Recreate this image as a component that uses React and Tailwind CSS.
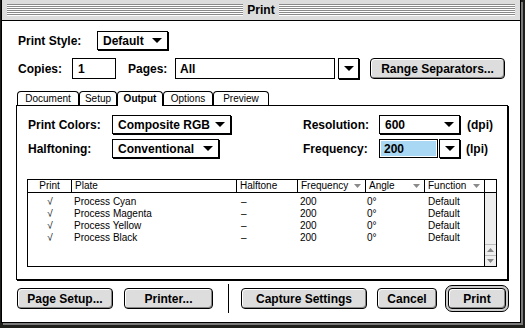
import React from 'react';

const Tri = ({ w = 10, h = 5, fill = '#000' }) => (
  <svg width={w} height={h} viewBox={`0 0 ${w} ${h}`} className="shrink-0">
    <polygon points={`0,0 ${w},0 ${w / 2},${h}`} fill={fill} />
  </svg>
);

const UpTri = ({ w = 7, h = 4, fill = '#888' }) => (
  <svg width={w} height={h} viewBox={`0 0 ${w} ${h}`}>
    <polygon points={`0,${h} ${w},${h} ${w / 2},0`} fill={fill} />
  </svg>
);

const Stripes = () => (
  <div className="flex flex-1 flex-col">
    {[0, 1, 2, 3, 4, 5].map((i) => (
      <div key={i} className="h-[2px] border-t border-[#8a8a8a] bg-white" />
    ))}
  </div>
);

const Popup = ({ label, className = '' }) => (
  <div className={`flex h-[19px] shrink-0 items-center justify-between border border-black bg-white pl-[5px] pr-[5px] text-[12px] font-bold shadow-[1px_1px_0_#000] ${className}`}>
    <span>{label}</span>
    <Tri />
  </div>
);

const ArrowBox = ({ className = '' }) => (
  <div className={`flex shrink-0 items-center justify-center border border-black bg-white shadow-[1px_1px_0_#000] ${className}`}>
    <Tri />
  </div>
);

const Button = ({ children, className = '' }) => (
  <div className={`flex h-[21px] shrink-0 items-center justify-center rounded-[4px] border border-black bg-[#dddddd] text-[12px] font-bold shadow-[inset_1px_1px_0_#fff,inset_-1px_-1px_0_#888] ${className}`}>
    {children}
  </div>
);

const tabs = [
  { name: 'Document', w: 'w-[62px]' },
  { name: 'Setup', w: 'w-[38px]' },
  { name: 'Output', w: 'w-[46px]', active: true },
  { name: 'Options', w: 'w-[50px]' },
  { name: 'Preview', w: 'w-[56px]' },
];

const cols = [
  { name: 'Print', w: 'w-[44px]', center: true },
  { name: 'Plate', w: 'w-[165px]' },
  { name: 'Halftone', w: 'w-[61px]' },
  { name: 'Frequency', w: 'w-[68px]', sort: true },
  { name: 'Angle', w: 'w-[59px]', sort: true },
  { name: 'Function', w: 'w-[59px]', sort: true, last: true },
];

const plates = ['Process Cyan', 'Process Magenta', 'Process Yellow', 'Process Black'];

export default function App() {
  return (
    <div className="h-[328px] w-[525px] overflow-hidden bg-[#1e1e1a] font-['Liberation_Sans',sans-serif] text-black">
      <div className="ml-px w-[520px] border-x border-b border-black shadow-[2px_2px_0_#7a7a7a]">
        {/* Title bar */}
        <div className="flex h-[21px] items-center border-b border-black bg-[#dddddd] px-[5px]">
          <Stripes />
          <span className="px-[4px] text-[12px] font-bold leading-none">Print</span>
          <Stripes />
        </div>

        {/* Body */}
        <div className="bg-white pb-[10px] pl-[14px] pr-[11px] pt-[10px]">
          <div className="ml-[2px] flex h-[20px] items-start">
            <span className="mt-[1px] w-[79px] text-[12px] font-bold">Print Style:</span>
            <Popup label="Default" className="w-[71px]" />
          </div>

          <div className="ml-[2px] mt-[7px] flex h-[21px] items-center">
            <span className="w-[54px] text-[12px] font-bold">Copies:</span>
            <div className="flex h-[21px] w-[44px] items-center border border-black pl-[5px] text-[12px] font-bold">1</div>
            <span className="ml-[12px] w-[47px] text-[12px] font-bold">Pages:</span>
            <div className="flex h-[21px] w-[160px] items-center border border-black pl-[4px] text-[12px] font-bold">All</div>
            <ArrowBox className="ml-[3px] h-[21px] w-[21px]" />
            <Button className="ml-[11px] h-[20px] w-[135px]">Range Separators...</Button>
          </div>

          {/* Tabs */}
          <div className="ml-px mt-[12px] flex h-[14px] items-end">
            {tabs.map((t) => (
              <div
                key={t.name}
                className={`relative flex items-center justify-center rounded-t-[4px] border-x border-t border-black bg-white text-[10px] leading-none ${t.w} ${
                  t.active ? 'z-10 -mb-px h-[15px] font-bold' : 'h-[14px]'
                }`}
              >
                {t.name}
              </div>
            ))}
          </div>

          {/* Panel */}
          <div className="h-[175px] w-[492px] border border-black pl-[11px] pt-[9px] shadow-[1px_1px_0_#000]">
            <div className="flex">
              <div className="flex w-[275px] flex-col gap-[4px]">
                <div className="flex h-[20px] items-start">
                  <span className="mt-[1px] w-[84px] text-[12px] font-bold">Print Colors:</span>
                  <Popup label="Composite RGB" className="w-[119px]" />
                </div>
                <div className="flex h-[20px] items-start">
                  <span className="mt-[1px] w-[84px] text-[12px] font-bold">Halftoning:</span>
                  <Popup label="Conventional" className="w-[107px]" />
                </div>
              </div>
              <div className="flex flex-col gap-[4px]">
                <div className="flex h-[20px] items-start">
                  <span className="mt-[1px] w-[76px] text-[12px] font-bold">Resolution:</span>
                  <Popup label="600" className="w-[81px]" />
                  <span className="ml-[7px] mt-[1px] text-[12px] font-bold">(dpi)</span>
                </div>
                <div className="flex h-[20px] items-start">
                  <span className="mt-[1px] w-[76px] text-[12px] font-bold">Frequency:</span>
                  <div className="h-[19px] w-[59px] border border-black bg-white p-px">
                    <div className="flex h-full items-center bg-[#a8d8f4] pl-[3px] text-[12px] font-bold">200</div>
                  </div>
                  <ArrowBox className="ml-px h-[19px] w-[21px]" />
                  <span className="ml-[6px] mt-[1px] text-[12px] font-bold">(lpi)</span>
                </div>
              </div>
            </div>

            {/* Table */}
            <div className="-ml-px mt-[20px] flex h-[88px] w-[470px] border border-black text-[10px] leading-none">
              <div className="flex flex-1 flex-col">
                <div className="flex h-[13px] border-b border-black">
                  {cols.map((c) => (
                    <div
                      key={c.name}
                      className={`flex items-center ${c.w} ${c.last ? '' : 'border-r border-black'} ${
                        c.center ? 'justify-center' : 'justify-between pl-[3px] pr-[4px]'
                      }`}
                    >
                      <span>{c.name}</span>
                      {c.sort && <Tri w={7} h={4} fill="#8a8a8a" />}
                    </div>
                  ))}
                </div>
                <div className="pt-[3px]">
                  {plates.map((p) => (
                    <div key={p} className="flex h-[12px] items-center">
                      <div className="flex w-[44px] justify-center">√</div>
                      <div className="w-[165px] pl-[2px]">{p}</div>
                      <div className="w-[61px] pl-[4px]">–</div>
                      <div className="w-[68px] pl-[2px]">200</div>
                      <div className="w-[59px] pl-[1px]">0°</div>
                      <div className="w-[59px] pl-[3px]">Default</div>
                    </div>
                  ))}
                </div>
              </div>
              <div className="flex w-[12px] flex-col border-l border-black">
                <div className="h-[13px] border-b border-black bg-white" />
                <div className="flex-1 bg-[#eeeeee]" />
                <div className="flex h-[11px] items-center justify-center border-t border-[#bbbbbb] bg-[#eeeeee]">
                  <UpTri />
                </div>
                <div className="flex h-[11px] items-center justify-center border-t border-[#bbbbbb] bg-[#eeeeee]">
                  <Tri w={7} h={4} fill="#888" />
                </div>
              </div>
            </div>
          </div>

          {/* Buttons */}
          <div className="ml-px mt-[5px] flex h-[27px] items-center">
            <Button className="w-[96px]">Page Setup...</Button>
            <Button className="ml-[11px] w-[89px]">Printer...</Button>
            <div className="ml-[15px] h-[29px] w-px bg-black" />
            <Button className="ml-[12px] w-[126px]">Capture Settings</Button>
            <Button className="ml-[10px] w-[60px]">Cancel</Button>
            <div className="ml-[8px] flex h-[27px] w-[64px] items-center justify-center rounded-[7px] border border-black bg-[#cccccc] p-[2px]">
              <Button className="w-full">Print</Button>
            </div>
          </div>
        </div>
      </div>
    </div>
  );
}
